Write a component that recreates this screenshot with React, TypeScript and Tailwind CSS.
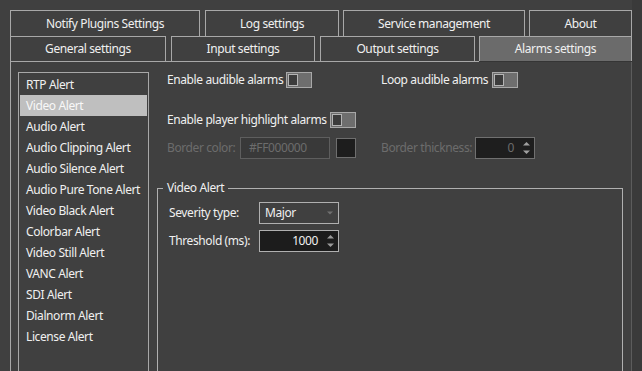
import React from "react";

function Toggle() {
  return (
    <div className="flex h-[16px] w-[26px] shrink-0 border border-[#a8a8a8] bg-[#6e6e6e] p-[1px]">
      <div className="h-[12px] w-[10px] border border-[#b4b4b4] bg-[#3c3c3c]" />
    </div>
  );
}

function SpinArrows({ color }: { color: string }) {
  return (
    <svg width="7" height="12" viewBox="0 0 7 12" className="shrink-0">
      <path d="M3.5 0 L7 3.5 L0 3.5 Z" fill={color} />
      <path d="M0 8.5 L7 8.5 L3.5 12 Z" fill={color} />
    </svg>
  );
}

const alerts = [
  "RTP Alert",
  "Video Alert",
  "Audio Alert",
  "Audio Clipping Alert",
  "Audio Silence Alert",
  "Audio Pure Tone Alert",
  "Video Black Alert",
  "Colorbar Alert",
  "Video Still Alert",
  "VANC Alert",
  "SDI Alert",
  "Dialnorm Alert",
  "License Alert",
];

export default function App() {
  return (
    <div className="flex h-[371px] w-[642px] overflow-hidden bg-[#404040] font-['Noto_Sans',sans-serif] text-[12px] leading-[16px] tracking-[-0.4px] text-[#f0f0f0]">
      <div className="flex h-[371px] w-[632px] shrink-0 flex-col pl-[10px] pt-[10px]">
        {/* tab row 1 */}
        <div className="flex h-[26px] shrink-0">
          <div className="flex w-[190px] items-center justify-center border-l border-r border-t border-[#a8a8a8]">Notify Plugins Settings</div>
          <div className="ml-[5px] flex w-[134px] items-center justify-center border-l border-r border-t border-[#a8a8a8]">Log settings</div>
          <div className="ml-[4px] flex w-[182px] items-center justify-center border-l border-r border-t border-[#a8a8a8]">Service management</div>
          <div className="ml-[4px] flex w-[103px] items-center justify-center border-l border-r border-t border-[#a8a8a8]">About</div>
        </div>
        {/* tab row 2 */}
        <div className="flex h-[25px] shrink-0">
          <div className="flex w-[156px] items-center justify-center border-l border-r border-t border-[#a8a8a8]">General settings</div>
          <div className="ml-[5px] flex w-[144px] items-center justify-center border-l border-r border-t border-[#a8a8a8]">Input settings</div>
          <div className="ml-[5px] flex w-[155px] items-center justify-center border-l border-r border-t border-[#a8a8a8]">Output settings</div>
          <div className="ml-[4px] flex w-[153px] items-center justify-center border-l border-r border-t border-[#a8a8a8] bg-[#6b6b6b]">Alarms settings</div>
        </div>
        {/* pane top border */}
        <div className="flex h-[1px] shrink-0">
          <div className="w-[469px] bg-[#a8a8a8]" />
          <div className="flex-1 bg-[#353535]" />
        </div>
        {/* pane */}
        <div className="flex min-h-0 flex-1 gap-[8px] overflow-hidden border-l border-r border-l-[#a8a8a8] border-r-[#5c5c5c] pl-[7px] pt-[10px]">
          {/* list */}
          <div className="flex h-[320px] w-[131px] shrink-0 flex-col border border-[#a8a8a8] p-[1px]">
            {alerts.map((a, i) => (
              <div
                key={a}
                className={
                  i === 1
                    ? "flex h-[21px] shrink-0 items-center whitespace-nowrap bg-[#bfbfbf] pl-[6px] text-[#f8f8f8]"
                    : "flex h-[21px] shrink-0 items-center whitespace-nowrap pl-[6px]"
                }
              >
                {a}
              </div>
            ))}
          </div>
          {/* right side */}
          <div className="flex w-[466px] shrink-0 flex-col">
            <div className="flex h-[16px] shrink-0 items-center pl-[10px]">
              <div className="flex w-[214px] items-center">
                <span className="w-[119px] whitespace-nowrap">Enable audible alarms</span>
                <Toggle />
              </div>
              <div className="flex items-center">
                <span className="w-[111px] whitespace-nowrap">Loop audible alarms</span>
                <Toggle />
              </div>
            </div>
            <div className="mt-[24px] flex h-[16px] shrink-0 items-center pl-[10px]">
              <span className="w-[163px] whitespace-nowrap">Enable player highlight alarms</span>
              <Toggle />
            </div>
            <div className="mt-[9px] flex h-[22px] shrink-0 items-center pl-[10px]">
              <div className="flex w-[214px] items-center">
                <span className="w-[73px] whitespace-nowrap text-[#6c6c6c]">Border color:</span>
                <div className="flex h-[22px] w-[90px] items-center border border-[#5e5e5e] bg-[#393939] pl-[8px] text-[#6c6c6c]">#FF000000</div>
                <div className="ml-[6px] h-[20px] w-[20px] border border-[#6e6e6e] bg-[#1d1d1d]" />
              </div>
              <div className="flex items-center">
                <span className="w-[94px] whitespace-nowrap text-[#6c6c6c]">Border thickness:</span>
                <div className="flex h-[22px] w-[60px] items-center border border-[#707070] bg-[#1e1e1e] pr-[4px] text-[#6c6c6c]">
                  <span className="flex-1 text-right">0</span>
                  <div className="ml-[9px]">
                    <SpinArrows color="#a0a0a0" />
                  </div>
                </div>
              </div>
            </div>
            <fieldset className="mt-[21px] h-[200px] shrink-0 border border-[#b0b0b0]">
              <legend className="ml-[5px] px-[4px] leading-[16px]">Video Alert</legend>
              <div className="flex flex-col pl-[11px] pt-[6px]">
                <div className="flex h-[22px] items-center">
                  <span className="w-[90px] whitespace-nowrap">Severity type:</span>
                  <div className="flex h-[22px] w-[80px] items-center border border-[#b0b0b0] pl-[5px] pr-[5px]">
                    <span className="flex-1">Major</span>
                    <svg width="6" height="4" viewBox="0 0 6 4">
                      <path d="M0 0.5 L6 0.5 L3 3.5 Z" fill="#707070" />
                    </svg>
                  </div>
                </div>
                <div className="mt-[6px] flex h-[22px] items-center">
                  <span className="w-[90px] whitespace-nowrap">Threshold (ms):</span>
                  <div className="flex h-[22px] w-[80px] items-center border border-[#b0b0b0] bg-[#1c1c1c] pr-[4px]">
                    <span className="flex-1 text-right">1000</span>
                    <div className="ml-[9px]">
                      <SpinArrows color="#9a9a9a" />
                    </div>
                  </div>
                </div>
              </div>
            </fieldset>
          </div>
        </div>
      </div>
      <div className="h-full flex-1 bg-[#3a3a3a]" />
    </div>
  );
}
